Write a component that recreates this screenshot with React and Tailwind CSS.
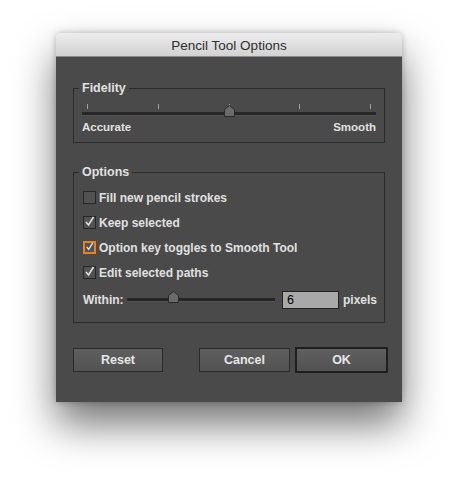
import React from 'react';

const font = { fontFamily: '"Liberation Sans", Arial, sans-serif' };

function Check({ checked, focus }) {
  return (
    <span
      className={
        'flex h-[13px] w-[13px] shrink-0 items-center justify-center bg-[#525252] ' +
        (focus ? 'border-2 border-[#e8841f]' : 'border border-[#262626]')
      }
    >
      {checked && (
        <svg width="11" height="11" viewBox="0 0 11 11" className="-mt-[2px]">
          <path d="M2 6 L4.5 9 L9.5 1" fill="none" stroke="#e2e2e2" strokeWidth="1.6" />
        </svg>
      )}
    </span>
  );
}

function Thumb() {
  return (
    <svg width="11" height="12" viewBox="0 0 11 12">
      <path d="M0.5 4.5 L5.5 0.5 L10.5 4.5 L10.5 11.5 L0.5 11.5 Z" fill="#6a6a6a" stroke="#2a2a2a" />
    </svg>
  );
}

function Row({ checked, focus, children }) {
  return (
    <label className="flex h-[25px] items-center gap-[3px]">
      <Check checked={checked} focus={focus} />
      <span className="text-[12px] font-bold text-[#e0e0e0]">{children}</span>
    </label>
  );
}

function Btn({ children, primary, className = '' }) {
  return (
    <button
      className={
        'shrink-0 bg-gradient-to-b from-[#5f5f5f] to-[#525252] text-[12.5px] font-bold text-[#e6e6e6] ' +
        (primary ? 'h-[26px] border-2 border-[#1f1f1f]' : 'h-[24px] border border-[#2a2a2a]') +
        ' ' + className
      }
    >
      {children}
    </button>
  );
}

export default function App() {
  return (
    <div className="min-h-[481px] w-[459px] bg-white pl-[56px] pt-[33px]" style={font}>
      <div className="flex h-[369px] w-[346px] flex-col overflow-hidden rounded-t-[5px] shadow-[0_22px_40px_rgba(0,0,0,0.55),0_0_6px_rgba(0,0,0,0.25)]">
        {/* title bar */}
        <div className="flex h-[24px] shrink-0 items-center justify-center border-b border-[#8a8a8a] bg-gradient-to-b from-[#ededed] to-[#d2d2d2] pt-[3px] text-[13.5px] text-[#2e2e2e]">
          Pencil Tool Options
        </div>

        <div className="flex flex-1 flex-col bg-[#4a4a4a] px-[17px] pt-[23px]">
          {/* Fidelity */}
          <fieldset className="h-[63px] min-w-0 border border-[#2b2b2b] px-[8px]">
            <legend className="-ml-[3px] px-[3px] text-[12.5px] font-bold leading-[16px] text-[#e0e0e0]">Fidelity</legend>
            <div className="mt-[8px] flex justify-between px-[5px]">
              {[0, 1, 2, 3, 4].map((i) => (
                <span key={i} className="h-[5px] w-px bg-[#a0a0a0]" />
              ))}
            </div>
            <div className="relative mt-[3px] h-[4px] border-b border-[#555] bg-[#262626]">
              <span className="absolute left-[142px] top-[-7px]">
                <Thumb />
              </span>
            </div>
            <div className="mt-[4px] flex justify-between text-[11.5px] font-bold leading-[14px] text-[#e0e0e0]">
              <span>Accurate</span>
              <span>Smooth</span>
            </div>
          </fieldset>

          {/* Options */}
          <fieldset className="mt-[21px] h-[159px] min-w-0 border border-[#2b2b2b] px-[9px]">
            <legend className="-ml-[4px] px-[3px] text-[12.5px] font-bold leading-[16px] text-[#e0e0e0]">Options</legend>
            <div className="mt-[5px] flex flex-col">
              <Row>Fill new pencil strokes</Row>
              <Row checked>Keep selected</Row>
              <Row checked focus>Option key toggles to Smooth Tool</Row>
              <Row checked>Edit selected paths</Row>
            </div>
            <div className="mt-[1px] flex h-[28px] items-center">
              <span className="w-[44px] shrink-0 text-[12px] font-bold text-[#e0e0e0]">Within:</span>
              <div className="relative h-[4px] w-[148px] shrink-0 border-b border-[#555] bg-[#262626]">
                <span className="absolute left-[41px] top-[-7px]">
                  <Thumb />
                </span>
              </div>
              <div className="ml-[7px] flex h-[18px] w-[57px] shrink-0 items-center border border-[#222] bg-[#a9a9a9] pl-[4px] text-[12.5px] text-black">
                6
              </div>
              <span className="ml-[4px] text-[12px] font-bold text-[#e0e0e0]">pixels</span>
            </div>
          </fieldset>

          {/* buttons */}
          <div className="mt-[24px] flex items-center">
            <Btn className="w-[90px]">Reset</Btn>
            <Btn className="ml-[36px] w-[91px]">Cancel</Btn>
            <Btn primary className="ml-[5px] w-[93px]">OK</Btn>
          </div>
        </div>
      </div>
    </div>
  );
}
